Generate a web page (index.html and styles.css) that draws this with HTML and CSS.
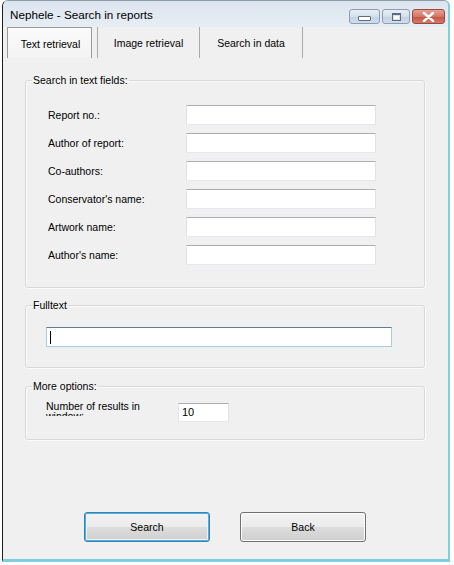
FILE: index.html
```html
<!DOCTYPE html>
<html>
<head>
<meta charset="utf-8">
<title>Nephele - Search in reports</title>
<link rel="stylesheet" href="styles.css">
</head>
<body>
<div class="window">
  <div class="titlebar">
    <span class="title">Nephele - Search in reports</span>
    <div class="ctrls">
      <div class="cbtn min"><span class="min-glyph"></span></div>
      <div class="cbtn max"><span class="max-glyph"></span></div>
      <div class="cbtn close">
        <svg width="13" height="10" viewBox="0 0 13 10"><path d="M2 1 L11 9 M11 1 L2 9" stroke="#fff" stroke-width="2.4" stroke-linecap="round"/></svg>
      </div>
    </div>
  </div>
  <div class="client">
    <div class="tabs">
      <div class="tab selected">Text retrieval</div>
      <div class="tab t2">Image retrieval</div>
      <div class="tab t3">Search in data</div>
    </div>
    <div class="page">
      <fieldset class="group g1">
        <legend>Search in text fields:</legend>
        <div class="rows">
          <div class="row"><span class="lbl">Report no.:</span><div class="tb"></div></div>
          <div class="row"><span class="lbl">Author of report:</span><div class="tb"></div></div>
          <div class="row"><span class="lbl">Co-authors:</span><div class="tb"></div></div>
          <div class="row"><span class="lbl">Conservator's name:</span><div class="tb"></div></div>
          <div class="row"><span class="lbl">Artwork name:</span><div class="tb"></div></div>
          <div class="row"><span class="lbl">Author's name:</span><div class="tb"></div></div>
        </div>
      </fieldset>
      <fieldset class="group g2">
        <legend>Fulltext</legend>
        <div class="tb full"><span class="caret"></span></div>
      </fieldset>
      <fieldset class="group g3">
        <legend>More options:</legend>
        <div class="optrow">
          <div class="optlbl">Number of results in window:</div>
          <div class="tb num">10</div>
        </div>
      </fieldset>
      <div class="buttons">
        <div class="btn default">Search</div>
        <div class="btn">Back</div>
      </div>
    </div>
  </div>
</div>
</body>
</html>
```
FILE: styles.css
```css
html, body {
  margin: 0;
  padding: 0;
  background: #ffffff;
}
body {
  font-family: "Liberation Sans", Arial, sans-serif;
  font-size: 10.5px;
  color: #000;
}
.window {
  margin-left: 2px;
  width: 445px;
  height: 558px;
  border-top: 1px solid #8e9cab;
  border-left: 1px solid #1e1e1e;
  border-right: 2px solid #7fcde0;
  border-bottom: 3px solid #7fcde0;
  border-radius: 6px 6px 0 0;
  background: #f0f0f0;
  display: flex;
  flex-direction: column;
}
.titlebar {
  height: 26px;
  display: flex;
  align-items: flex-start;
  background: linear-gradient(#dce5ef, #e7edf4);
  border-radius: 5px 5px 0 0;
}
.title {
  font-size: 11.7px;
  line-height: 14px;
  padding: 7px 0 0 7px;
  color: #000;
}
.ctrls {
  margin-left: auto;
  margin-right: 3px;
  margin-top: 8px;
  display: flex;
  gap: 2px;
}
.cbtn {
  height: 15px;
  border: 1px solid #8d9db0;
  border-radius: 3px;
  display: flex;
  align-items: center;
  justify-content: center;
  box-sizing: border-box;
}
.min, .max {
  background: linear-gradient(#e9eff6 0%, #d4dfeb 50%, #c3d2e3 51%, #cfdced 100%);
}
.min { width: 31px; }
.max { width: 28px; }
.close {
  width: 33px;
  border-color: #9a4a3c;
  background: linear-gradient(#e6a194 0%, #d4756a 50%, #c5533f 51%, #d6796a 100%);
}
.min-glyph {
  width: 11px;
  height: 3px;
  margin-top: 4px;
  background: #fff;
  border: 1px solid #5d6d7e;
  border-radius: 1px;
}
.max-glyph {
  width: 7px;
  height: 5px;
  border: 1px solid #5d6d7e;
  border-top-width: 2px;
  background: #fff;
  box-shadow: inset 0 0 0 1px #d6e0ec;
}
.client {
  flex: 1;
  display: flex;
  flex-direction: column;
}
.tabs {
  height: 31px;
  display: flex;
  padding-left: 4px;
}
.tab {
  height: 31px;
  box-sizing: border-box;
  display: flex;
  align-items: center;
  justify-content: center;
  font-size: 10.5px;
}
.tab.selected {
  width: 85px;
  border: 1px solid #9a9a9a;
  border-bottom: none;
  background: linear-gradient(#fbfbfb, #f3f3f3);
  padding-top: 1px;
  padding-left: 2px;
}
.tab.t2 {
  margin-left: 5px;
  width: 102px;
  border-left: 1px solid #a9a9a9;
}
.tab.t3 {
  width: 104px;
  border-left: 1px solid #a9a9a9;
  border-right: 1px solid #a9a9a9;
}
.page {
  flex: 1;
  display: flex;
  flex-direction: column;
  padding: 0 23px 0 22px;
}
.group {
  margin: 0;
  padding: 0;
  border: 1px solid #d5d9dc;
  border-radius: 3px;
  box-shadow: inset 1px 1px 0 #fbfbfb, 1px 1px 0 #fbfbfb;
  min-width: 0;
}
.group legend {
  margin-left: 6px;
  padding: 0 1px;
  line-height: 13px;
  font-size: 10.5px;
}
.g1 { margin-top: 16px; }
.rows {
  display: flex;
  flex-direction: column;
  gap: 8px;
  padding: 18px 0 22px 22px;
}
.row {
  display: flex;
  align-items: center;
}
.lbl {
  width: 138px;
}
.tb {
  box-sizing: border-box;
  height: 20px;
  background: #fff;
  border: 1px solid #e2e3ea;
  border-top-color: #abadb3;
  border-bottom-color: #e3e9ef;
}
.row .tb { width: 190px; }
.g2 { margin-top: 11px; }
.tb.full {
  width: 346px;
  margin: 15px 0 20px 20px;
  border-color: #a8cbe3;
  border-top-color: #5c7e98;
  display: flex;
  align-items: center;
  padding-left: 3px;
}
.caret {
  width: 1px;
  height: 13px;
  background: #000;
}
.g3 { margin-top: 12px; }
.optrow {
  display: flex;
  align-items: flex-start;
  padding: 8px 0 17px 20px;
}
.optlbl {
  width: 126px;
  margin-right: 6px;
  height: 15px;
  line-height: 10px;
  overflow: hidden;
}
.tb.num {
  width: 51px;
  height: 19px;
  margin-top: 2px;
  padding-left: 3px;
  line-height: 17px;
  font-size: 11px;
}
.buttons {
  display: flex;
  gap: 30px;
  margin-top: 72px;
  padding-left: 59px;
}
.btn {
  width: 126px;
  height: 30px;
  box-sizing: border-box;
  border: 1px solid #707070;
  border-radius: 3px;
  background: linear-gradient(#f2f2f2 0%, #ebebeb 50%, #dddddd 51%, #cfcfcf 100%);
  box-shadow: inset 0 0 0 1px #fcfcfc;
  display: flex;
  align-items: center;
  justify-content: center;
  font-size: 10.5px;
}
.btn.default {
  border-color: #3c7fb1;
  box-shadow: inset 0 0 0 1px #4bb0e8, inset 0 0 0 2px #e9f4fb;
}
```
